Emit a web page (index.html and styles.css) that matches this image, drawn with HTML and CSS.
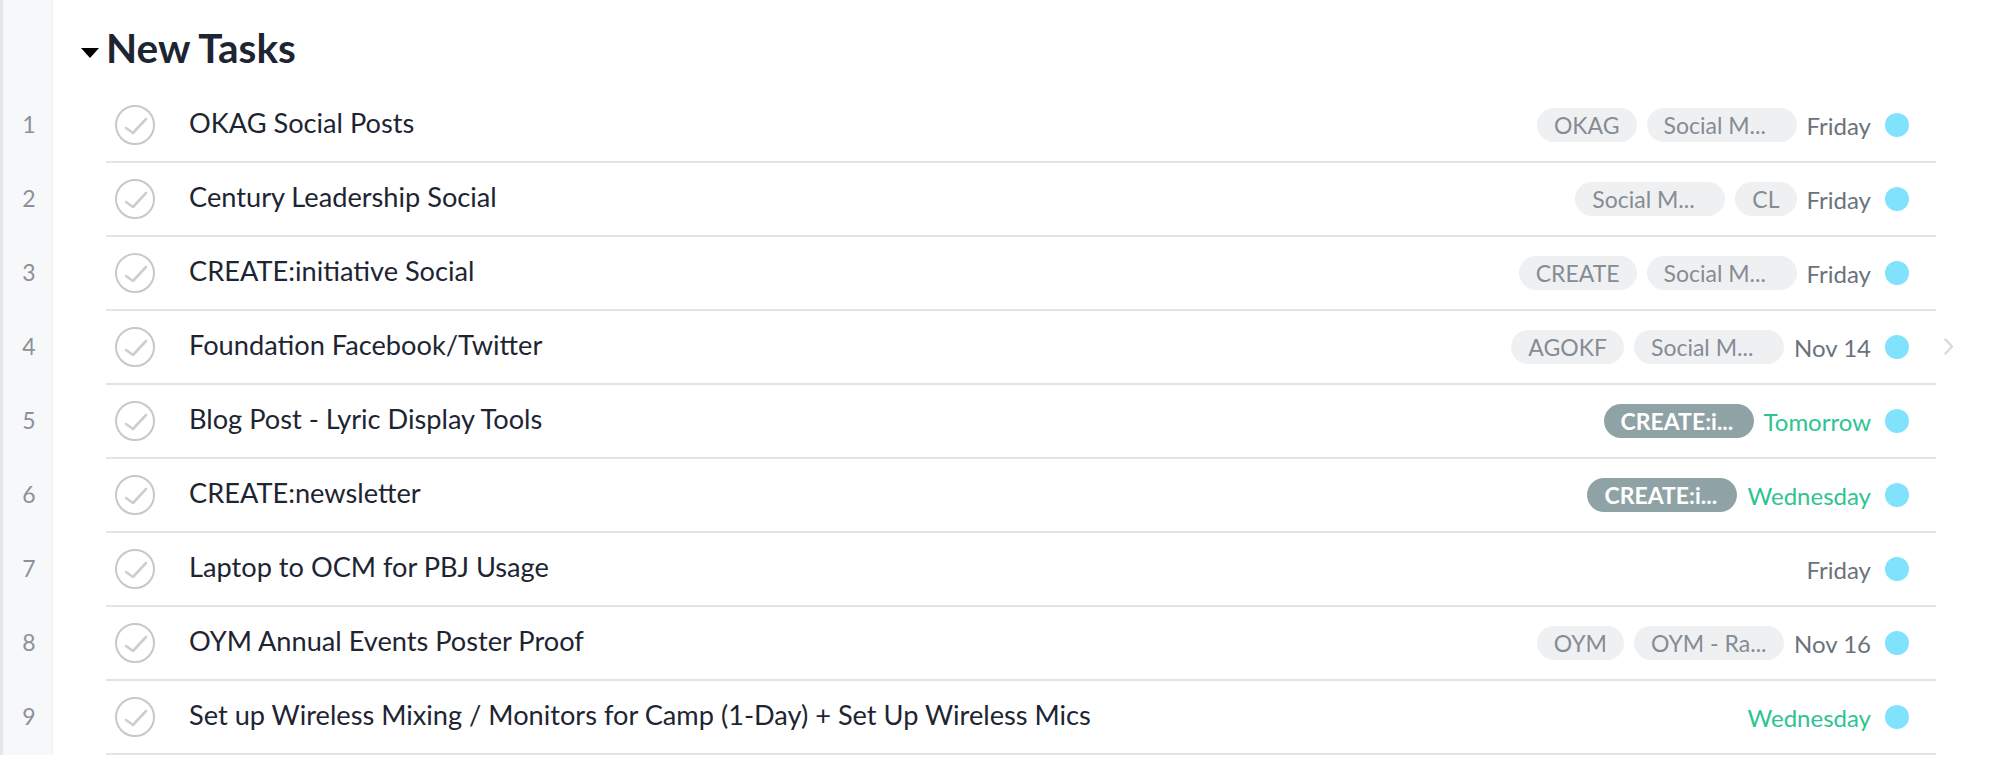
FILE: index.html
```html
<!DOCTYPE html>
<html>
<head>
<meta charset="utf-8">
<link rel="stylesheet" href="styles.css">
</head>
<body>
<div class="list">
  <div class="head">
    <div class="gut"></div>
    <div class="title"><span class="caret"></span><span class="title-text">New Tasks</span></div>
  </div>

  <div class="row">
    <div class="gut num">1</div>
    <div class="task">
      <span class="check"><svg viewBox="0 0 40 40" width="40" height="40"><circle cx="20" cy="20" r="19" /><path d="M11 23 L18 28 L31 14" /></svg></span>
      <span class="name">OKAG Social Posts</span>
      <span class="meta"><span class="tag">OKAG</span><span class="tag trunc">Social M...</span><span class="date">Friday</span><span class="dot"></span></span>
    </div>
    <div class="side"></div>
  </div>

  <div class="row">
    <div class="gut num">2</div>
    <div class="task">
      <span class="check"><svg viewBox="0 0 40 40" width="40" height="40"><circle cx="20" cy="20" r="19" /><path d="M11 23 L18 28 L31 14" /></svg></span>
      <span class="name">Century Leadership Social</span>
      <span class="meta"><span class="tag trunc">Social M...</span><span class="tag">CL</span><span class="date">Friday</span><span class="dot"></span></span>
    </div>
    <div class="side"></div>
  </div>

  <div class="row">
    <div class="gut num">3</div>
    <div class="task">
      <span class="check"><svg viewBox="0 0 40 40" width="40" height="40"><circle cx="20" cy="20" r="19" /><path d="M11 23 L18 28 L31 14" /></svg></span>
      <span class="name">CREATE:initiative Social</span>
      <span class="meta"><span class="tag">CREATE</span><span class="tag trunc">Social M...</span><span class="date">Friday</span><span class="dot"></span></span>
    </div>
    <div class="side"></div>
  </div>

  <div class="row">
    <div class="gut num">4</div>
    <div class="task">
      <span class="check"><svg viewBox="0 0 40 40" width="40" height="40"><circle cx="20" cy="20" r="19" /><path d="M11 23 L18 28 L31 14" /></svg></span>
      <span class="name">Foundation Facebook/Twitter</span>
      <span class="meta"><span class="tag">AGOKF</span><span class="tag trunc">Social M...</span><span class="date">Nov 14</span><span class="dot"></span></span>
    </div>
    <div class="side"><svg class="chev" viewBox="0 0 10 17" width="10" height="17"><path d="M1.5 1.5 L8 8.5 L1.5 15.5" /></svg></div>
  </div>

  <div class="row">
    <div class="gut num">5</div>
    <div class="task">
      <span class="check"><svg viewBox="0 0 40 40" width="40" height="40"><circle cx="20" cy="20" r="19" /><path d="M11 23 L18 28 L31 14" /></svg></span>
      <span class="name">Blog Post - Lyric Display Tools</span>
      <span class="meta"><span class="tag dark trunc">CREATE:i...</span><span class="date green">Tomorrow</span><span class="dot"></span></span>
    </div>
    <div class="side"></div>
  </div>

  <div class="row">
    <div class="gut num">6</div>
    <div class="task">
      <span class="check"><svg viewBox="0 0 40 40" width="40" height="40"><circle cx="20" cy="20" r="19" /><path d="M11 23 L18 28 L31 14" /></svg></span>
      <span class="name">CREATE:newsletter</span>
      <span class="meta"><span class="tag dark trunc">CREATE:i...</span><span class="date green">Wednesday</span><span class="dot"></span></span>
    </div>
    <div class="side"></div>
  </div>

  <div class="row">
    <div class="gut num">7</div>
    <div class="task">
      <span class="check"><svg viewBox="0 0 40 40" width="40" height="40"><circle cx="20" cy="20" r="19" /><path d="M11 23 L18 28 L31 14" /></svg></span>
      <span class="name">Laptop to OCM for PBJ Usage</span>
      <span class="meta"><span class="date">Friday</span><span class="dot"></span></span>
    </div>
    <div class="side"></div>
  </div>

  <div class="row">
    <div class="gut num">8</div>
    <div class="task">
      <span class="check"><svg viewBox="0 0 40 40" width="40" height="40"><circle cx="20" cy="20" r="19" /><path d="M11 23 L18 28 L31 14" /></svg></span>
      <span class="name">OYM Annual Events Poster Proof</span>
      <span class="meta"><span class="tag">OYM</span><span class="tag trunc">OYM - Ra...</span><span class="date">Nov 16</span><span class="dot"></span></span>
    </div>
    <div class="side"></div>
  </div>

  <div class="row">
    <div class="gut num">9</div>
    <div class="task">
      <span class="check"><svg viewBox="0 0 40 40" width="40" height="40"><circle cx="20" cy="20" r="19" /><path d="M11 23 L18 28 L31 14" /></svg></span>
      <span class="name">Set up Wireless Mixing / Monitors for Camp (1-Day) + Set Up Wireless Mics</span>
      <span class="meta"><span class="date green">Wednesday</span><span class="dot"></span></span>
    </div>
    <div class="side"></div>
  </div>
</div>
</body>
</html>
```

FILE: styles.css
```css
* { box-sizing: border-box; }
html, body {
  margin: 0;
  padding: 0;
  background: #ffffff;
  font-family: "Lato", "Liberation Sans", sans-serif;
  overflow: hidden;
}
.list {
  width: 2000px;
  height: 760px;
}
.head, .row {
  display: flex;
}
.head { height: 89px; }
.row { height: 74px; }
.gut {
  width: 53px;
  flex: 0 0 53px;
  background: #f7f8f9;
  border-left: 3px solid #e4e6e8;
  border-right: 1px solid #eeeff1;
}
.num {
  display: flex;
  align-items: center;
  justify-content: center;
  padding-left: 3px;
  padding-bottom: 5px;
  font-size: 23px;
  color: #8c9198;
}
.title {
  display: flex;
  align-items: flex-start;
  padding-top: 24px;
  padding-left: 28px;
}
.caret {
  width: 0;
  height: 0;
  margin-top: 24px;
  margin-right: 7px;
  border-left: 9.5px solid transparent;
  border-right: 9.5px solid transparent;
  border-top: 10px solid #000000;
}
.title-text {
  font-size: 40.5px;
  line-height: 48px;
  font-weight: 700;
  color: #1e2532;
}
.task {
  margin-left: 53px;
  width: 1830px;
  flex: 0 0 1830px;
  border-bottom: 2px solid #e3e4e5;
  display: flex;
  align-items: center;
  padding-left: 9px;
  padding-right: 27px;
}
.check {
  width: 40px;
  height: 40px;
  flex: 0 0 40px;
  display: flex;
}
.check circle {
  fill: none;
  stroke: #c5c9cd;
  stroke-width: 2;
}
.check path {
  fill: none;
  stroke: #cbcfd3;
  stroke-width: 2.6;
  stroke-linecap: round;
  stroke-linejoin: round;
}
.name {
  margin-left: 34px;
  padding-bottom: 5px;
  font-size: 27.2px;
  color: #1e2532;
  white-space: nowrap;
}
.meta {
  margin-left: auto;
  display: flex;
  align-items: center;
}
.tag {
  height: 34px;
  line-height: 34px;
  padding: 0 17px;
  margin-right: 10px;
  border-radius: 17px;
  background: #eff0f2;
  color: #858c94;
  font-size: 23px;
  white-space: nowrap;
}
.tag.trunc {
  width: 150px;
  overflow: hidden;
}
.tag.dark {
  background: #8fa3a6;
  color: #ffffff;
  font-weight: 700;
}
.date {
  font-size: 24px;
  color: #6a727b;
  white-space: nowrap;
}
.date.green { color: #2ec492; }
.dot {
  width: 24px;
  height: 24px;
  margin-left: 14px;
  border-radius: 50%;
  background: #80e2fc;
}
.side {
  display: flex;
  align-items: center;
  padding-left: 8px;
  padding-bottom: 4px;
}
.chev path {
  fill: none;
  stroke: #d7dadd;
  stroke-width: 2.4;
  stroke-linecap: round;
  stroke-linejoin: round;
}
```
